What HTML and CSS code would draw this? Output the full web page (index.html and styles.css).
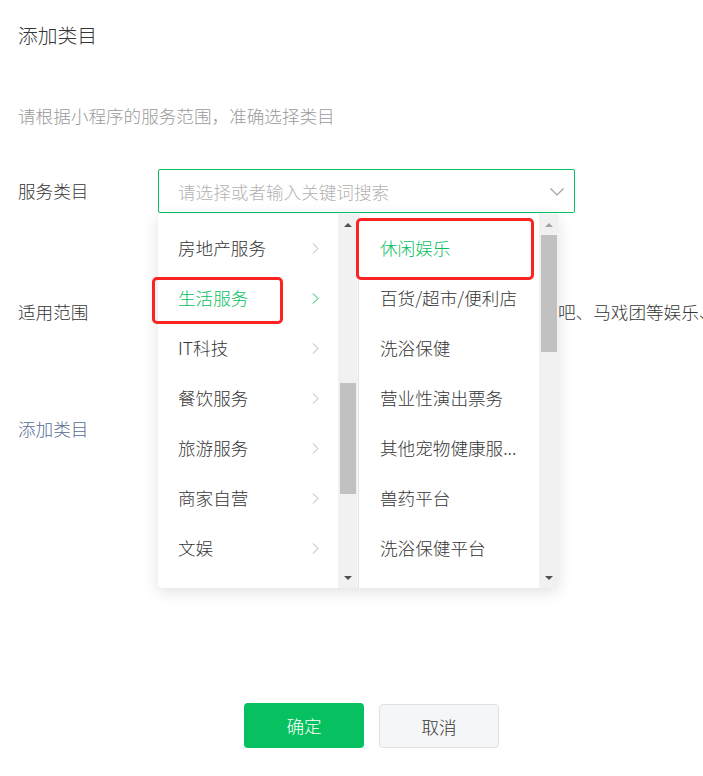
FILE: index.html
```html
<!DOCTYPE html>
<html lang="zh-CN">
<head>
<meta charset="utf-8">
<title>添加类目</title>
<link rel="stylesheet" href="styles.css">
</head>
<body>
<div class="dialog">
  <h1 class="title">添加类目</h1>
  <p class="subtitle">请根据小程序的服务范围，准确选择类目</p>
  <div class="form">
    <div class="row row-cat">
      <div class="label">服务类目</div>
      <div class="field">
        <div class="select">
          <span class="placeholder">请选择或者输入关键词搜索</span>
          <svg class="caret" viewBox="0 0 14 8" width="14" height="8"><path d="M0.5 0.5 L7 7 L13.5 0.5" fill="none" stroke="#a0a0a0" stroke-width="1.2"/></svg>
        </div>
        <div class="dropdown">
          <div class="col">
            <ul class="list list-left">
              <li class="item"><span>房地产服务</span><svg class="chev" viewBox="0 0 7 11" width="7" height="11"><path d="M1 0.5 L6 5.5 L1 10.5" fill="none" stroke="currentColor" stroke-width="1"/></svg></li>
              <li class="item active"><span>生活服务</span><svg class="chev" viewBox="0 0 7 11" width="7" height="11"><path d="M1 0.5 L6 5.5 L1 10.5" fill="none" stroke="currentColor" stroke-width="1"/></svg></li>
              <li class="item"><span>IT科技</span><svg class="chev" viewBox="0 0 7 11" width="7" height="11"><path d="M1 0.5 L6 5.5 L1 10.5" fill="none" stroke="currentColor" stroke-width="1"/></svg></li>
              <li class="item"><span>餐饮服务</span><svg class="chev" viewBox="0 0 7 11" width="7" height="11"><path d="M1 0.5 L6 5.5 L1 10.5" fill="none" stroke="currentColor" stroke-width="1"/></svg></li>
              <li class="item"><span>旅游服务</span><svg class="chev" viewBox="0 0 7 11" width="7" height="11"><path d="M1 0.5 L6 5.5 L1 10.5" fill="none" stroke="currentColor" stroke-width="1"/></svg></li>
              <li class="item"><span>商家自营</span><svg class="chev" viewBox="0 0 7 11" width="7" height="11"><path d="M1 0.5 L6 5.5 L1 10.5" fill="none" stroke="currentColor" stroke-width="1"/></svg></li>
              <li class="item"><span>文娱</span><svg class="chev" viewBox="0 0 7 11" width="7" height="11"><path d="M1 0.5 L6 5.5 L1 10.5" fill="none" stroke="currentColor" stroke-width="1"/></svg></li>
            </ul>
            <div class="sbar">
              <div class="sb-btn"><span class="tri-up"></span></div>
              <div class="sb-track"><div class="sb-thumb" style="margin-top:148px;height:111px"></div></div>
              <div class="sb-btn"><span class="tri-down"></span></div>
            </div>
          </div>
          <div class="divider"></div>
          <div class="col">
            <ul class="list list-right">
              <li class="item active">休闲娱乐</li>
              <li class="item">百货/超市/便利店</li>
              <li class="item">洗浴保健</li>
              <li class="item">营业性演出票务</li>
              <li class="item">其他宠物健康服...</li>
              <li class="item">兽药平台</li>
              <li class="item">洗浴保健平台</li>
            </ul>
            <div class="sbar sbar-right">
              <div class="sb-btn"><span class="tri-up disabled"></span></div>
              <div class="sb-track"><div class="sb-thumb" style="margin-top:0;height:117px"></div></div>
              <div class="sb-btn"><span class="tri-down"></span></div>
            </div>
          </div>
          <div class="mark mark-left"></div>
          <div class="mark mark-right"></div>
        </div>
      </div>
    </div>
    <div class="row row-scope">
      <div class="label">适用范围</div>
      <div class="scope-text">吧、马戏团等娱乐、休闲服务</div>
    </div>
    <div class="row row-add">
      <a class="add-link">添加类目</a>
    </div>
  </div>
  <div class="actions">
    <button class="btn btn-primary">确定</button>
    <button class="btn btn-default">取消</button>
  </div>
</div>
</body>
</html>
```

FILE: styles.css
```css
html, body {
  margin: 0;
  padding: 0;
  background: #fff;
  overflow: hidden;
}
body {
  width: 703px;
  height: 776px;
  font-family: "Noto Sans CJK SC", "Microsoft YaHei", sans-serif;
  font-size: 17.6px;
  font-weight: 300;
  color: #353535;
}
.dialog {
  padding: 21px 0 0 18px;
}
.title {
  margin: 0;
  font-size: 19.8px;
  font-weight: 300;
  line-height: 28px;
  color: #353535;
}
.subtitle {
  margin: 55px 0 0;
  line-height: 24px;
  color: #9a9a9a;
}
.form {
  margin-top: 41px;
}
.row {
  display: flex;
  white-space: nowrap;
}
.label {
  width: 140px;
  flex: none;
  line-height: 24px;
}
.row-cat .label {
  line-height: 44px;
}
.field {
  position: relative;
}
.select {
  width: 417px;
  height: 44px;
  box-sizing: border-box;
  border: 1px solid #07c160;
  border-radius: 2px;
  display: flex;
  align-items: center;
  justify-content: space-between;
  padding: 0 10px 0 19px;
}
.placeholder {
  color: #b2b2b2;
}
.caret {
  display: block;
  margin-top: 2px;
}
.dropdown {
  position: absolute;
  left: 0;
  top: 45px;
  z-index: 10;
  display: flex;
  height: 374px;
  background: #fff;
  border-radius: 0 6px 6px 4px;
  box-shadow: 0 4px 16px rgba(0, 0, 0, 0.12);
}
.col {
  display: flex;
  overflow: hidden;
}
.col:last-of-type {
  border-radius: 0 6px 6px 0;
}
.list {
  list-style: none;
  margin: 0;
  padding: 9px 0 0;
  width: 180px;
  box-sizing: border-box;
}
.item {
  height: 50px;
  line-height: 50px;
  white-space: nowrap;
  overflow: hidden;
}
.list-left .item {
  display: flex;
  align-items: center;
  justify-content: space-between;
  padding: 0 19px 0 20px;
  color: #353535;
}
.list-left .item .chev {
  color: #b2b2b2;
  display: block;
}
.list-left .item.active,
.list-left .item.active .chev,
.list-right .item.active {
  color: #07c160;
}
.list-right .item {
  padding: 0 18px 0 21px;
}
.sbar {
  width: 19px;
  background: #f1f1f1;
  display: flex;
  flex-direction: column;
}
.sb-btn {
  height: 21px;
  flex: none;
  display: flex;
  align-items: center;
  justify-content: center;
}
.tri-up {
  width: 0;
  height: 0;
  border-left: 4px solid transparent;
  border-right: 4px solid transparent;
  border-bottom: 4px solid #505050;
}
.tri-up.disabled {
  border-bottom-color: #a3a3a3;
}
.tri-down {
  width: 0;
  height: 0;
  border-left: 4px solid transparent;
  border-right: 4px solid transparent;
  border-top: 4px solid #505050;
}
.sb-track {
  flex: 1;
  padding: 0 1px 0 2px;
}
.sb-thumb {
  background: #c1c1c1;
}
.divider {
  width: 1px;
  background: #f6f6f6;
  border-right: 1px solid #e3e3e3;
}
.mark {
  position: absolute;
  border: 3px solid #fb2323;
  border-radius: 5px;
  box-sizing: border-box;
  pointer-events: none;
}
.mark-left {
  left: -6px;
  top: 63px;
  width: 131px;
  height: 47px;
}
.mark-right {
  left: 198px;
  top: 4px;
  width: 178px;
  height: 62px;
}
.row-scope {
  margin-top: 87px;
}
.scope-text {
  line-height: 24px;
  padding-left: 400px;
  color: #353535;
}
.row-add {
  margin-top: 93px;
}
.add-link {
  line-height: 24px;
  color: #576b95;
  cursor: pointer;
}
.actions {
  margin: 262px 0 0 226px;
  display: flex;
  gap: 15px;
}
.btn {
  width: 120px;
  height: 45px;
  border-radius: 4px;
  font-family: inherit;
  font-size: 17.6px;
  font-weight: 300;
  padding: 0;
  cursor: pointer;
}
.btn-primary {
  background: #07c160;
  color: #fff;
  border: none;
}
.btn-default {
  background: #f5f6f7;
  color: #353535;
  border: 1px solid #e0e1e3;
  height: 44px;
  margin-top: 1px;
}
```
